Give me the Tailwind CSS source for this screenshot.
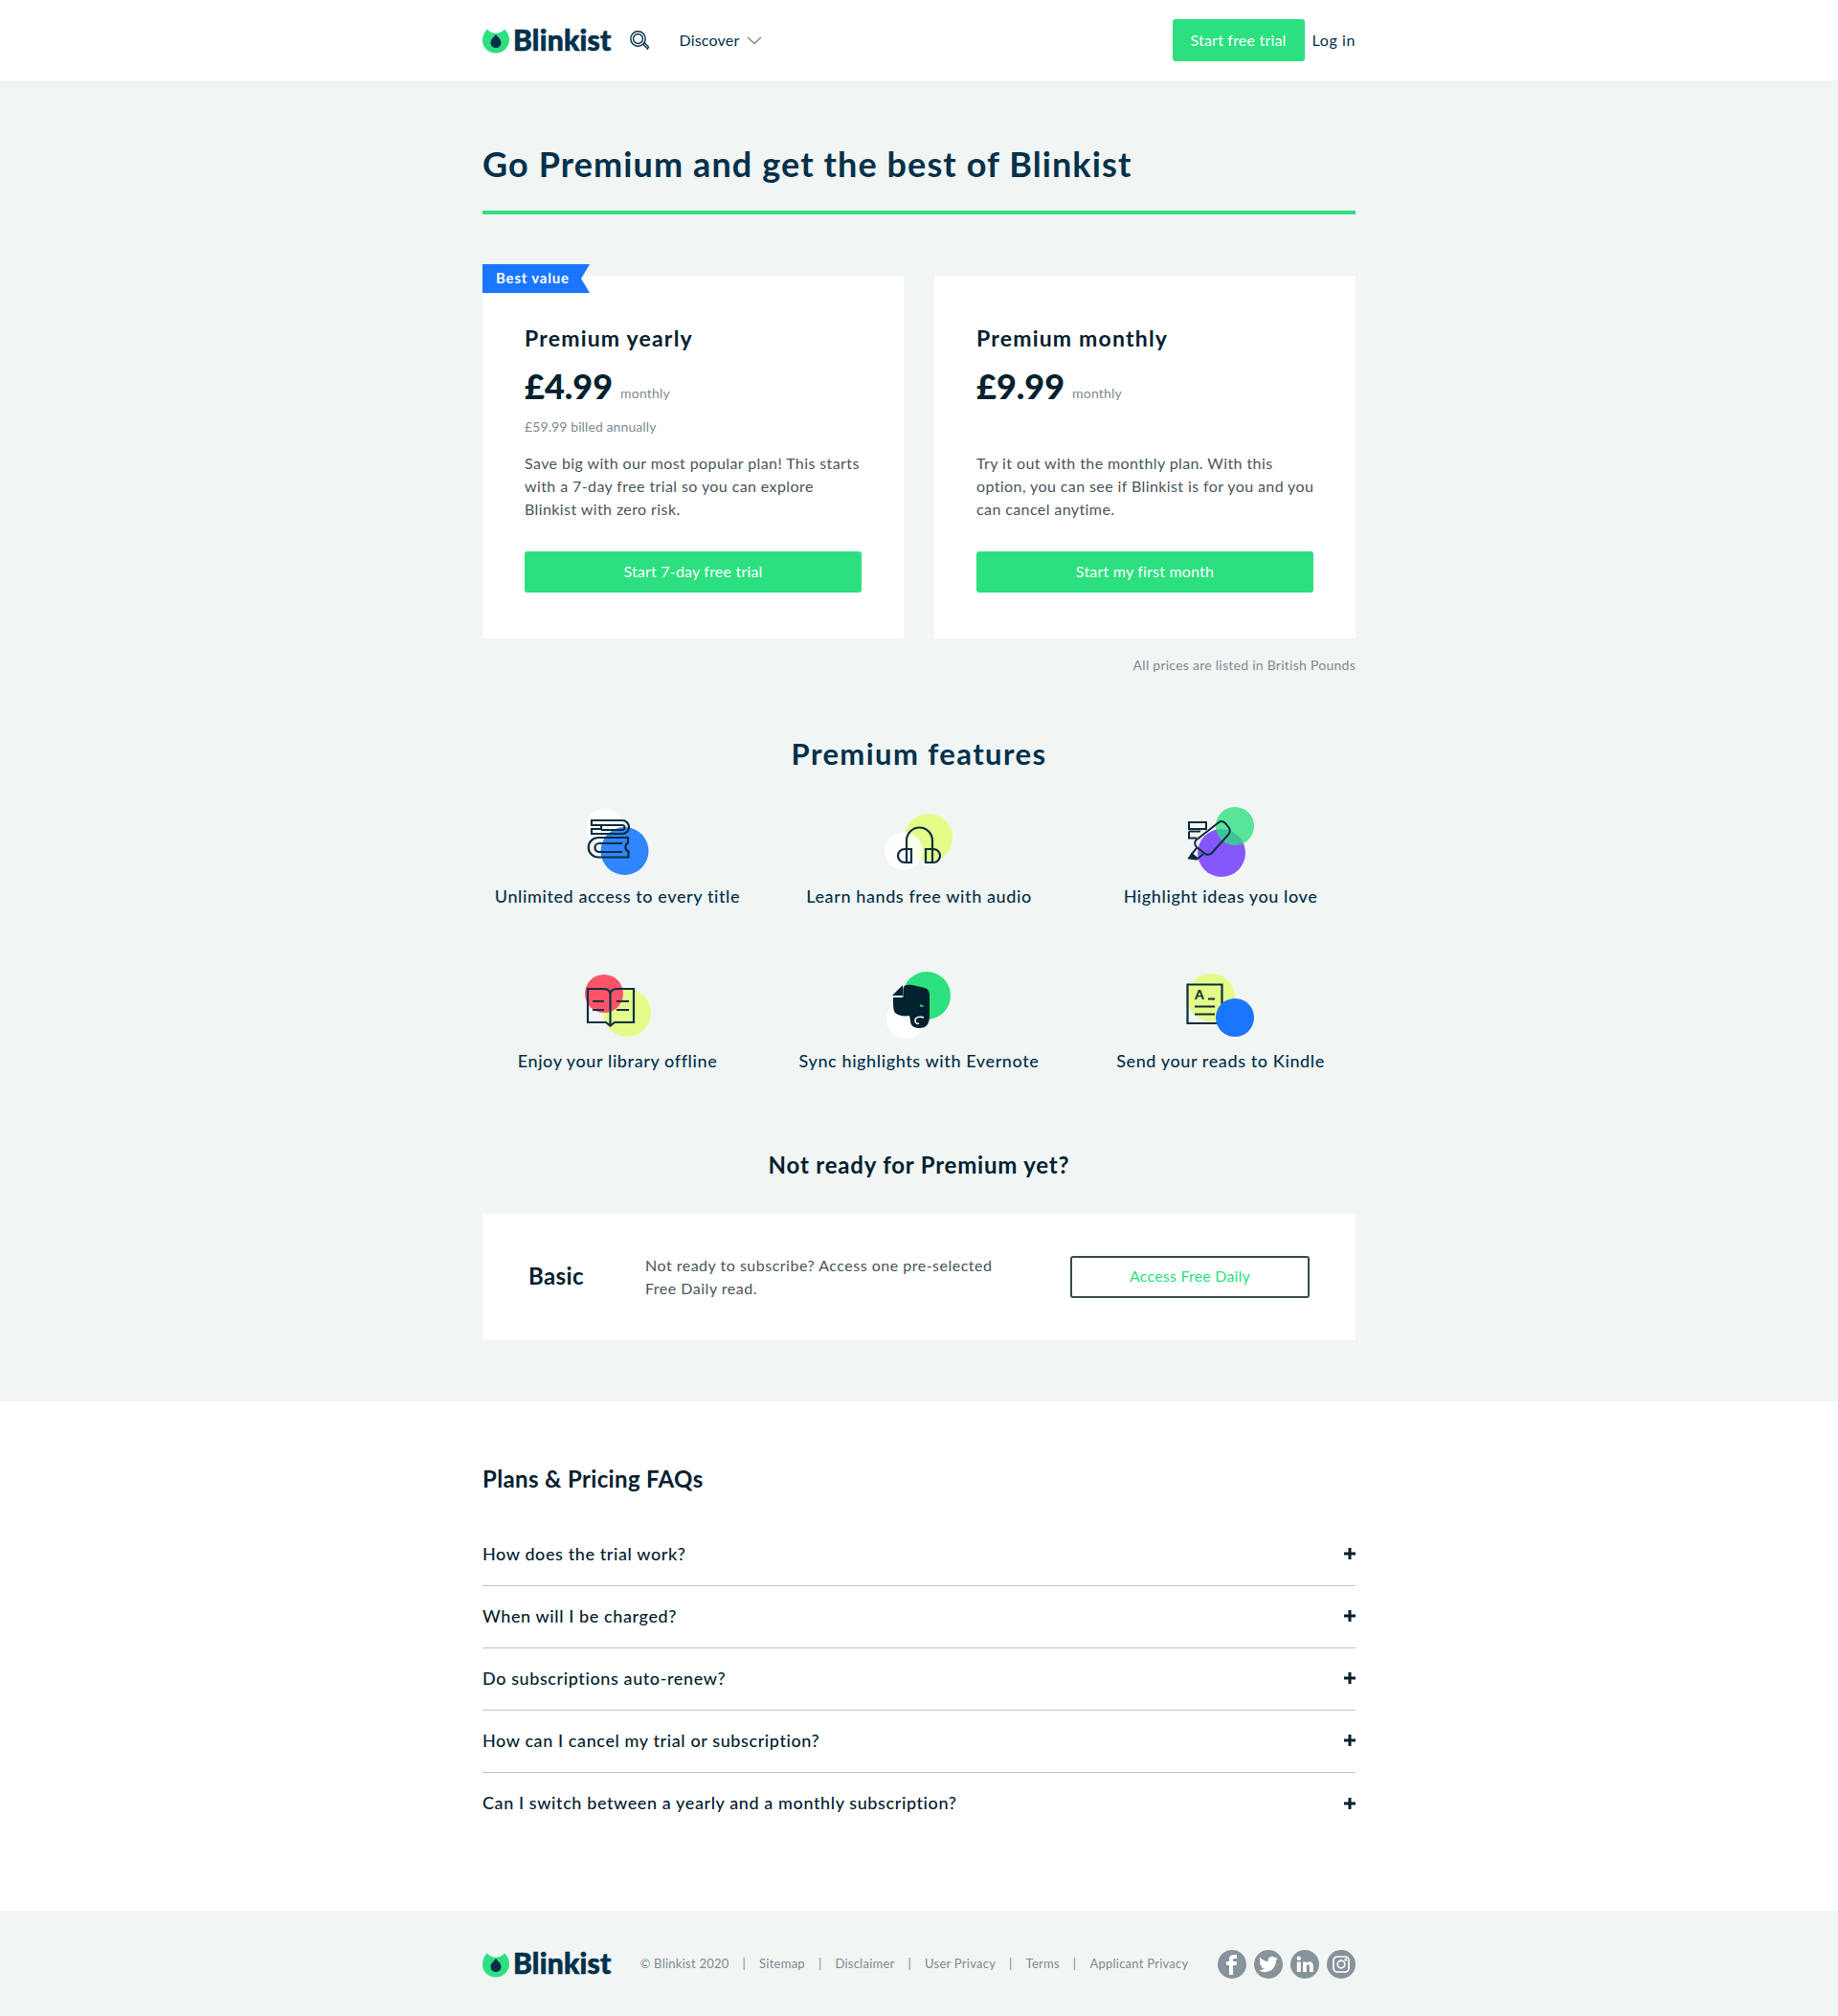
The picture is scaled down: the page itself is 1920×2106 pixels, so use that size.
<!DOCTYPE html>
<html lang="en">
<head>
  <meta charset="UTF-8">
  <title>Blinkist Premium</title>
  <meta name="viewport" content="width=device-width, initial-scale=1.0">
  <script src="https://cdn.jsdelivr.net/npm/@tailwindcss/browser@4"></script>
</head>
<body class="bg-white font-['Lato',sans-serif] text-[#03314b]">

  <!-- Header -->
  <header class="h-[84px] bg-white">
    <div class="w-[912px] h-full mx-auto flex items-center">
      <a class="flex items-center gap-[4px]">
        <svg class="w-[28px] h-[28px]" viewBox="0 0 28 28"><path d="M5 2.500C7 5 10 6.500 14 7c4 -.5 7 -2 9 -4.500 3 2.500 5 6.500 5 11 0 7.700 -6.300 14 -14 14S0 21.700 0 14C0 9.500 2 5.200 5 2.500Z" fill="#2ce080"/><path d="M14 8c2 3 5.500 5 5.500 8.500a5.500 5.500 0 0 1 -11 0C8.500 13 12 11 14 8Z" fill="#03314b"/></svg>
        <span class="pb-[2px] text-[30px] font-black leading-none tracking-[0.2px] [-webkit-text-stroke:0.6px_#03314b]">Blinkist</span>
      </a>
      <svg class="ml-[20px] w-[20px] h-[21px]" viewBox="0 0 20 21" fill="none" stroke="#03314b" stroke-width="1.400"><circle cx="8.500" cy="8.500" r="7.700"/><circle cx="8.500" cy="8.500" r="5"/><path d="M13.500 14l5.500 5.500M15 12.500l5 5M14 14l1.500 -1.500M18 19l1.500 -1.500"/></svg>
      <span class="ml-[31px] text-[16px] tracking-[0.2px]">Discover</span>
      <svg class="ml-[7px] w-[16px] h-[9px]" viewBox="0 0 16 9" fill="none" stroke="#7d8a90" stroke-width="1.500"><path d="M1 1l7 6.500L15 1"/></svg>
      <a class="ml-auto w-[138px] h-[44px] rounded-[3px] bg-[#2ce080] text-white text-[16px] tracking-[0.2px] flex items-center justify-center">Start free trial</a>
      <a class="ml-[8px] text-[16px] tracking-[0.6px]">Log in</a>
    </div>
  </header>

  <!-- Plans -->
  <main class="bg-[#f1f5f4] pt-[60px] pb-[64px]">
    <div class="w-[912px] mx-auto">
      <h1 class="text-[36px] leading-[54px] font-bold pb-[22px] border-b-4 border-[#2ce080] tracking-[1.1px]">Go Premium and get the best of Blinkist</h1>

      <div class="grid grid-cols-2 gap-8 mt-16">
        <div class="relative bg-white px-[44px] pt-[49px] pb-[48px]">
          <div class="absolute left-0 top-[-12px] w-[112px] h-[30px] bg-[#1a76ff] text-white text-[15px] font-bold leading-[28px] pl-[14px] tracking-[0.8px] [clip-path:polygon(0_0,100%_0,92%_50%,100%_100%,0_100%)]">Best value</div>
          <h3 class="text-[23px] leading-[32px] font-bold text-[#03212f] tracking-[1.2px]">Premium yearly</h3>
          <div class="mt-3 flex items-end h-[44px]">
            <span class="text-[36px] leading-[44px] font-black text-[#03212f]">£4.99</span>
            <span class="ml-2 mb-[4px] text-[14px] leading-[20px] tracking-[0.2px] text-[#7f8a90]">monthly</span>
          </div>
          <p class="mt-[11px] h-[20px] text-[14px] leading-[20px] tracking-[0.1px] text-[#7f8a90]">£59.99 billed annually</p>
          <p class="mt-[16px] text-[16px] leading-[24px] tracking-[0.4px] whitespace-nowrap text-[#4a5559]">Save big with our most popular plan! This starts<br>with a 7-day free trial so you can explore<br>Blinkist with zero risk.</p>
          <a class="mt-[32px] h-[43px] pb-[2px] rounded-[3px] bg-[#2ce080] text-white text-[16px] tracking-[0.2px] flex items-center justify-center">Start 7-day free trial</a>
        </div>
        <div class="bg-white px-[44px] pt-[49px] pb-[48px]">
          <h3 class="text-[23px] leading-[32px] font-bold text-[#03212f] tracking-[1.2px]">Premium monthly</h3>
          <div class="mt-3 flex items-end h-[44px]">
            <span class="text-[36px] leading-[44px] font-black text-[#03212f]">£9.99</span>
            <span class="ml-2 mb-[4px] text-[14px] leading-[20px] tracking-[0.2px] text-[#7f8a90]">monthly</span>
          </div>
          <p class="mt-[11px] h-[20px]"></p>
          <p class="mt-[16px] text-[16px] leading-[24px] tracking-[0.4px] whitespace-nowrap text-[#4a5559]">Try it out with the monthly plan. With this<br>option, you can see if Blinkist is for you and you<br>can cancel anytime.</p>
          <a class="mt-[32px] h-[43px] pb-[2px] rounded-[3px] bg-[#2ce080] text-white text-[16px] tracking-[0.2px] flex items-center justify-center">Start my first month</a>
        </div>
      </div>
      <p class="mt-[18px] text-right text-[14px] leading-[20px] tracking-[0.26px] text-[#7f8a90]">All prices are listed in British Pounds</p>

      <h2 class="mt-[62px] text-center text-[31px] leading-[40px] font-bold tracking-[1.4px]">Premium features</h2>

      <div class="mt-[33px] grid grid-cols-3 gap-x-[33px] gap-y-[63px] text-center text-[18px] leading-[24px] font-medium tracking-[0.6px]">
        <div>
          <svg class="mx-auto w-[90px] h-[80px]" viewBox="600 840 90 80" fill="none">
            <circle cx="632" cy="864" r="19.500" fill="#fff"/><circle cx="652.500" cy="889" r="25" fill="#2f86ff"/>
            <g stroke="#0c2d3f" stroke-width="2.200"><path d="M618 857H650a7 7 0 0 1 0 14H618V866H628V862H618Z"/><path d="M628 862H650a2.500 2.500 0 0 1 0 5H628"/><path d="M656 875H625a10 10 0 0 0 0 20.500H656.500V889.500C653 889 652 882 656 880.500Z"/><path d="M650 881H626a4.500 4.500 0 0 0 0 9H650"/></g>
          </svg>
          <p class="mt-[4px]">Unlimited access to every title</p>
        </div>
        <div>
          <svg class="mx-auto w-[90px] h-[80px]" viewBox="915 840 90 80" fill="none">
            <circle cx="970" cy="875" r="25" fill="#e4fc88"/><circle cx="944" cy="889" r="20" fill="#fff" fill-opacity="0.800"/>
            <g stroke="#0c2d3f" stroke-width="2.200"><path d="M947 888V878a13.500 13.500 0 0 1 27 0V888"/><path d="M952 887H945a7 7 0 0 0 0 14H952ZM947 887V901"/><path d="M967 887H975a7 7 0 0 1 0 14H967ZM974 887V901"/></g>
          </svg>
          <p class="mt-[4px]">Learn hands free with audio</p>
        </div>
        <div>
          <svg class="mx-auto w-[90px] h-[80px]" viewBox="1230 840 90 80" fill="none">
            <circle cx="1276" cy="891" r="25" fill="#8557fb"/><circle cx="1290" cy="863" r="20" fill="#2ce080" fill-opacity="0.780"/>
            <g stroke="#0c2d3f" stroke-width="2"><path d="M1242 859H1260V866H1242ZM1242 868.500H1254M1242 868.500V875.500H1250"/><path d="M1272 860Q1276 856 1280 860L1284 865Q1286 869 1283 872L1266 891Q1263 894 1259 892L1250 885Q1247 882 1249 878Z"/><path d="M1250 886L1245 892L1251 897L1257 892"/><path d="M1245 892L1242 896.500L1249 897.500Z" fill="#0c2d3f"/></g>
          </svg>
          <p class="mt-[4px]">Highlight ideas you love</p>
        </div>
        <div>
          <svg class="mx-auto w-[90px] h-[80px]" viewBox="600 1011 90 80" fill="none">
            <circle cx="655" cy="1058" r="25" fill="#e4fc88"/><circle cx="631" cy="1038" r="20" fill="#fb5468"/>
            <g stroke="#0c3049" stroke-width="2.200"><path d="M614 1033H630C634 1033 637 1035 637.500 1038C638 1035 641 1033 645 1033H662V1068H642L637.500 1071.500L633 1068H614Z"/><path d="M637.500 1038V1072M619 1046H631M619 1055H631M644 1046H657M644 1055H657"/></g>
          </svg>
          <p class="mt-[5px]">Enjoy your library offline</p>
        </div>
        <div>
          <svg class="mx-auto w-[90px] h-[80px]" viewBox="915 1011 90 80" fill="none">
            <circle cx="968" cy="1040" r="25" fill="#2ce080"/><circle cx="946" cy="1065" r="20" fill="#fff"/>
            <path d="M932 1040L943 1029V1040Z" fill="#03212f"/>
            <path d="M943.500 1032C944 1029 948 1028 953 1029L966 1032C969 1033 971 1035 971 1040V1060C971 1070 968 1074 960 1074C953 1074 951 1070 951 1066L950 1061C945 1062 938 1061 935 1058C933 1055 933 1050 933 1042H943.500Z" fill="#03212f"/>
            <path d="M965 1063C960 1061 956 1063 956 1066C956 1069 958 1070 960 1069" stroke="#fff" stroke-width="1.500"/>
            <path d="M961 1049L966 1051.500L961.500 1052Z" fill="#2ce080"/>
          </svg>
          <p class="mt-[5px]">Sync highlights with Evernote</p>
        </div>
        <div>
          <svg class="mx-auto w-[90px] h-[80px]" viewBox="1230 1011 90 80" fill="none">
            <circle cx="1265" cy="1042" r="25" fill="#e4fc88"/>
            <g stroke="#0c2d3f" stroke-width="2.200"><path d="M1240.500 1028.500H1276.500V1069H1240.500Z"/><path d="M1262 1043.500H1269M1248 1051.500H1269M1248 1059.500H1269"/></g>
            <text x="1248" y="1044" font-size="14" font-weight="900" fill="#0c2d3f">A</text>
            <circle cx="1290" cy="1063" r="20" fill="#1a76ff"/>
          </svg>
          <p class="mt-[5px]">Send your reads to Kindle</p>
        </div>
      </div>

      <h2 class="mt-[81px] text-center text-[24px] leading-[32px] font-bold text-[#03212f] tracking-[0.8px]">Not ready for Premium yet?</h2>

      <div class="mt-[35px] h-[132px] bg-white pl-[48px] pr-[48px] flex items-center">
        <h3 class="w-[122px] pb-[2px] text-[24px] font-bold text-[#03212f] tracking-[0.4px]">Basic</h3>
        <p class="flex-1 text-[16px] leading-[24px] tracking-[0.5px] text-[#4a5559]">Not ready to subscribe? Access one pre-selected<br>Free Daily read.</p>
        <a class="w-[250px] h-[44px] pb-[2px] rounded-[3px] border-2 border-[#3a4a50] text-[#2ce080] text-[16px] tracking-[0.2px] flex items-center justify-center">Access Free Daily</a>
      </div>
    </div>
  </main>

  <!-- FAQ -->
  <section class="bg-white pt-[65px] pb-[79px]">
    <div class="w-[912px] mx-auto">
      <h2 class="text-[24px] leading-[32px] font-bold text-[#03212f] tracking-[0.35px]">Plans &amp; Pricing FAQs</h2>
      <div class="mt-[31px] text-[18px] font-medium tracking-[0.6px] text-[#03212f]">
        <div class="h-[65px] pb-[2px] border-b border-[#b5c7d0] flex items-center justify-between">How does the trial work?<svg class="w-[12px] h-[12px]" viewBox="0 0 12 12" stroke="#03212f" stroke-width="3"><path d="M0 6H12M6 0V12"/></svg></div>
        <div class="h-[65px] pb-[2px] border-b border-[#b5c7d0] flex items-center justify-between">When will I be charged?<svg class="w-[12px] h-[12px]" viewBox="0 0 12 12" stroke="#03212f" stroke-width="3"><path d="M0 6H12M6 0V12"/></svg></div>
        <div class="h-[65px] pb-[2px] border-b border-[#b5c7d0] flex items-center justify-between">Do subscriptions auto-renew?<svg class="w-[12px] h-[12px]" viewBox="0 0 12 12" stroke="#03212f" stroke-width="3"><path d="M0 6H12M6 0V12"/></svg></div>
        <div class="h-[65px] pb-[2px] border-b border-[#b5c7d0] flex items-center justify-between">How can I cancel my trial or subscription?<svg class="w-[12px] h-[12px]" viewBox="0 0 12 12" stroke="#03212f" stroke-width="3"><path d="M0 6H12M6 0V12"/></svg></div>
        <div class="h-[65px] pb-[2px] flex items-center justify-between">Can I switch between a yearly and a monthly subscription?<svg class="w-[12px] h-[12px]" viewBox="0 0 12 12" stroke="#03212f" stroke-width="3"><path d="M0 6H12M6 0V12"/></svg></div>
      </div>
    </div>
  </section>

  <!-- Footer -->
  <footer class="h-[111px] bg-[#f1f5f4]">
    <div class="w-[912px] h-full mx-auto flex items-center">
      <a class="flex items-center gap-[4px]">
        <svg class="w-[28px] h-[28px]" viewBox="0 0 28 28"><path d="M5 2.500C7 5 10 6.500 14 7c4 -.5 7 -2 9 -4.500 3 2.500 5 6.500 5 11 0 7.700 -6.300 14 -14 14S0 21.700 0 14C0 9.500 2 5.200 5 2.500Z" fill="#2ce080"/><path d="M14 8c2 3 5.500 5 5.500 8.500a5.500 5.500 0 0 1 -11 0C8.500 13 12 11 14 8Z" fill="#03314b"/></svg>
        <span class="pb-[3px] text-[30px] font-black leading-none tracking-[0.2px] [-webkit-text-stroke:0.6px_#03314b]">Blinkist</span>
      </a>
      <div class="ml-[30px] flex items-center text-[13px] tracking-[0.25px] text-[#7f8a90]">
        <span>© Blinkist 2020</span><span class="mx-[14px]">|</span>
        <a>Sitemap</a><span class="mx-[14px]">|</span>
        <a>Disclaimer</a><span class="mx-[14px]">|</span>
        <a>User Privacy</a><span class="mx-[14px]">|</span>
        <a>Terms</a><span class="mx-[14px]">|</span>
        <a>Applicant Privacy</a>
      </div>
      <div class="ml-auto flex gap-2">
        <a class="w-[30px] h-[30px] rounded-full bg-[#87939a] flex items-center justify-center"><svg class="w-[18px] h-[22px]" viewBox="0 0 18 22" fill="#fff"><path d="M6 22V12H3V8H6V5.500C6 2.500 8 1 10.500 1H14V5H11.500C10.500 5 10 5.500 10 6.500V8H14L13.500 12H10V22Z"/></svg></a>
        <a class="w-[30px] h-[30px] rounded-full bg-[#87939a] flex items-center justify-center"><svg class="w-[20px] h-[20px]" viewBox="0 0 24 24" fill="#fff"><path d="M23.953 4.57a10 10 0 01-2.825.775 4.958 4.958 0 002.163-2.723c-.951.555-2.005.959-3.127 1.184a4.92 4.92 0 00-8.384 4.482C7.69 8.095 4.067 6.13 1.64 3.162a4.822 4.822 0 00-.666 2.475c0 1.71.87 3.213 2.188 4.096a4.904 4.904 0 01-2.228-.616v.06a4.923 4.923 0 003.946 4.827 4.996 4.996 0 01-2.212.085 4.936 4.936 0 004.604 3.417 9.867 9.867 0 01-6.102 2.105c-.39 0-.779-.023-1.17-.067a13.995 13.995 0 007.557 2.209c9.053 0 13.998-7.496 13.998-13.985 0-.21 0-.42-.015-.63A9.935 9.935 0 0024 4.59z"/></svg></a>
        <a class="w-[30px] h-[30px] rounded-full bg-[#87939a] flex items-center justify-center"><svg class="w-[18px] h-[18px]" viewBox="0 0 18 18" fill="#fff"><circle cx="2.800" cy="2.800" r="2.200"/><path d="M.8 6.500H4.800V17H.8ZM7 6.500H10.800V8C11.500 7 12.800 6.200 14 6.200 16.800 6.200 17.800 8 17.800 11V17H14V11.500C14 10 13.500 9.200 12.300 9.200 11 9.200 10.800 10.300 10.800 11.500V17H7Z"/></svg></a>
        <a class="w-[30px] h-[30px] rounded-full bg-[#87939a] flex items-center justify-center"><svg class="w-[18px] h-[18px]" viewBox="0 0 18 18" fill="none" stroke="#fff" stroke-width="1.700"><rect x="1" y="1" width="16" height="16" rx="4"/><circle cx="9" cy="9" r="3.800"/><circle cx="13.800" cy="4.200" r=".6" fill="#fff"/></svg></a>
      </div>
    </div>
  </footer>

</body>
</html>
